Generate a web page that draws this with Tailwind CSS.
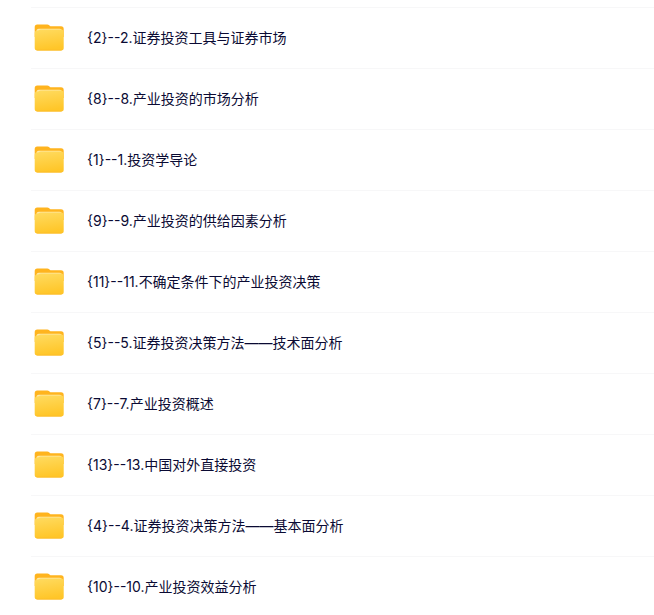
<!DOCTYPE html>
<html lang="zh-CN">
<head>
    <meta charset="UTF-8">
    <meta name="viewport" content="width=device-width, initial-scale=1.0">
    <title>文件列表</title>
    <script src="https://cdn.jsdelivr.net/npm/@tailwindcss/browser@4"></script>
</head>
<body class="bg-white h-screen overflow-hidden font-[Inter,'Noto_Sans_CJK_SC',sans-serif] text-sm text-[#0a0a33]">
    <!-- Shared folder icon -->
    <svg class="absolute size-0" aria-hidden="true">
        <defs>
            <linearGradient id="folderFront" x1="0" y1="0" x2="0.2" y2="1">
                <stop offset="0" stop-color="#ffdb60"/>
                <stop offset="1" stop-color="#ffc629"/>
            </linearGradient>
        </defs>
        <symbol id="folder" viewBox="0 1 32 32">
            <path fill="#ffb41e" d="M1.700 6a2.500 2.500 0 0 1 2.500-2.500h10c.9 0 1.500.2 2.100.8l.6.6c.4.3.8.4 1.300.4H28a2.700 2.700 0 0 1 2.700 2.700v8h-29z"/>
            <path fill="#ffe9a8" d="M3.500 10.500a2.500 2.500 0 0 1 2.500-2.700h20.500a2.500 2.500 0 0 1 2.500 2.500v3H3.500z"/>
            <path fill="url(#folderFront)" d="M1.700 12c0-1.500 1-2.500 2.500-2.500h.8c.5 0 .8-.1 1.200-.4.4-.4.8-.6 1.500-.6H28.200c1.500 0 2.500 1 2.500 2.500v15.700a2.700 2.700 0 0 1-2.700 2.700H4.400a2.700 2.700 0 0 1-2.700-2.700z"/>
            <path fill="#fcb92a" d="M1.900 27.200C2.300 28.200 3.300 28.700 4.500 28.700h23.400c1.300 0 2.300-.5 2.600-1.500-.1 1.300-1.200 2.200-2.600 2.200H4.500c-1.400 0-2.500-.9-2.600-2.200z"/>
        </symbol>
    </svg>

    <!-- File list -->
    <ul class="mt-[7px] ml-[31px]">
        <li class="border-t border-[#f7f7f8]">
            <a href="#" class="flex items-center h-15 pl-0.5 gap-[22px]">
                <svg class="size-8 shrink-0" aria-hidden="true"><use href="#folder"/></svg>
                <span>{2}--2.证券投资工具与证券市场</span>
            </a>
        </li>
        <li class="border-t border-[#f7f7f8]">
            <a href="#" class="flex items-center h-15 pl-0.5 gap-[22px]">
                <svg class="size-8 shrink-0" aria-hidden="true"><use href="#folder"/></svg>
                <span>{8}--8.产业投资的市场分析</span>
            </a>
        </li>
        <li class="border-t border-[#f7f7f8]">
            <a href="#" class="flex items-center h-15 pl-0.5 gap-[22px]">
                <svg class="size-8 shrink-0" aria-hidden="true"><use href="#folder"/></svg>
                <span>{1}--1.投资学导论</span>
            </a>
        </li>
        <li class="border-t border-[#f7f7f8]">
            <a href="#" class="flex items-center h-15 pl-0.5 gap-[22px]">
                <svg class="size-8 shrink-0" aria-hidden="true"><use href="#folder"/></svg>
                <span>{9}--9.产业投资的供给因素分析</span>
            </a>
        </li>
        <li class="border-t border-[#f7f7f8]">
            <a href="#" class="flex items-center h-15 pl-0.5 gap-[22px]">
                <svg class="size-8 shrink-0" aria-hidden="true"><use href="#folder"/></svg>
                <span>{11}--11.不确定条件下的产业投资决策</span>
            </a>
        </li>
        <li class="border-t border-[#f7f7f8]">
            <a href="#" class="flex items-center h-15 pl-0.5 gap-[22px]">
                <svg class="size-8 shrink-0" aria-hidden="true"><use href="#folder"/></svg>
                <span>{5}--5.证券投资决策方法——技术面分析</span>
            </a>
        </li>
        <li class="border-t border-[#f7f7f8]">
            <a href="#" class="flex items-center h-15 pl-0.5 gap-[22px]">
                <svg class="size-8 shrink-0" aria-hidden="true"><use href="#folder"/></svg>
                <span>{7}--7.产业投资概述</span>
            </a>
        </li>
        <li class="border-t border-[#f7f7f8]">
            <a href="#" class="flex items-center h-15 pl-0.5 gap-[22px]">
                <svg class="size-8 shrink-0" aria-hidden="true"><use href="#folder"/></svg>
                <span>{13}--13.中国对外直接投资</span>
            </a>
        </li>
        <li class="border-t border-[#f7f7f8]">
            <a href="#" class="flex items-center h-15 pl-0.5 gap-[22px]">
                <svg class="size-8 shrink-0" aria-hidden="true"><use href="#folder"/></svg>
                <span>{4}--4.证券投资决策方法——基本面分析</span>
            </a>
        </li>
        <li class="border-t border-[#f7f7f8]">
            <a href="#" class="flex items-center h-15 pl-0.5 gap-[22px]">
                <svg class="size-8 shrink-0" aria-hidden="true"><use href="#folder"/></svg>
                <span>{10}--10.产业投资效益分析</span>
            </a>
        </li>
    </ul>
</body>
</html>
